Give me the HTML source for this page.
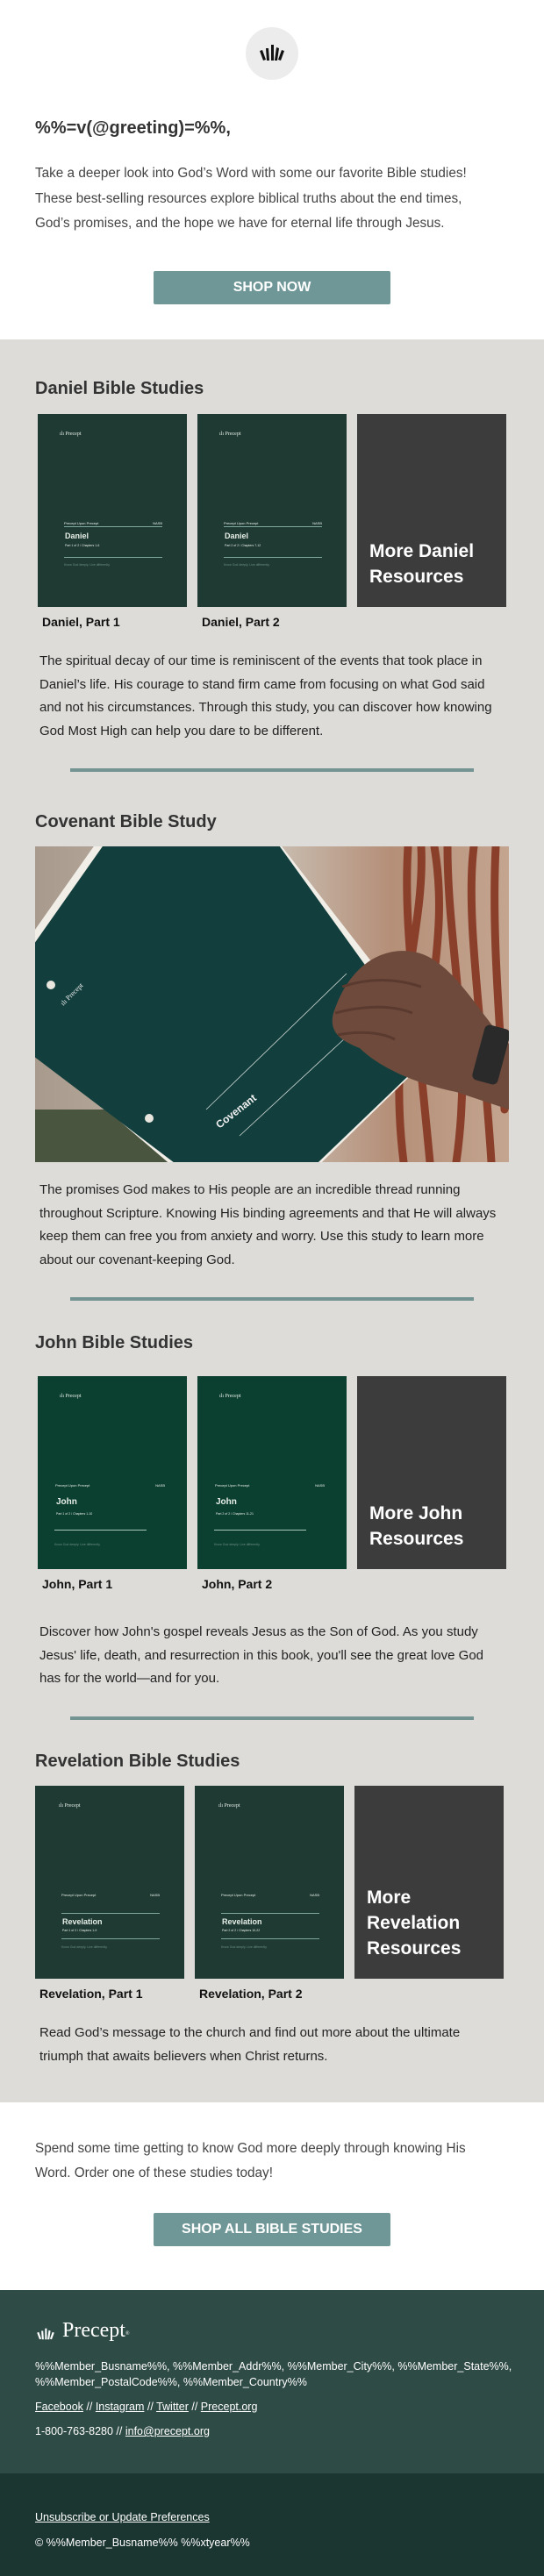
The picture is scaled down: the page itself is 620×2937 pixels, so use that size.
<!DOCTYPE html>
<html><head><meta charset="utf-8"><style>
*{margin:0;padding:0;box-sizing:border-box}
body{width:620px;height:2937px;position:relative;background:#fff;font-family:"Liberation Sans",Arial,sans-serif;overflow:hidden}
.a{position:absolute}
.p{position:absolute;left:45px;width:530px;font-size:15px;line-height:26.5px;color:#222}
.h{position:absolute;left:40px;font-size:20px;font-weight:bold;color:#333;line-height:24px}
.cap{position:absolute;font-size:14px;font-weight:bold;color:#111;line-height:16px}
.cov{position:absolute;width:170px;height:220px;background:#1e3a33;color:#e8efe9}
.cov.j{background:#0b3f30}
.cov .lg{position:absolute;left:25px;top:20px;font-size:6px;font-family:"Liberation Serif",serif}
.cov .l1{position:absolute;left:30px;top:122px;width:112px;font-size:4px}
.cov .l1 b{float:right;font-weight:normal}
.cov .ln{position:absolute;left:30px;width:112px;height:1px;background:#7fa69c}
.cov .t{position:absolute;left:31px;top:134px;font-size:9px;font-weight:bold}
.cov .s{position:absolute;left:31px;top:148px;font-size:3.5px}
.cov .f{position:absolute;left:30px;top:170px;font-size:3.5px;color:#6f8f86}
.more{position:absolute;width:170px;height:220px;background:#3c3c3c;color:#fff}
.more div{position:absolute;left:14px;bottom:20px;font-size:21px;font-weight:bold;line-height:29px}
.div{position:absolute;left:80px;width:460px;height:4px;background:#739493}
.btn{position:absolute;left:175px;width:270px;background:#6f9797;color:#fff;font-weight:bold;font-size:16px;text-align:center;border-radius:2px}
.ft{position:absolute;left:40px;color:#fff;font-size:12.5px;line-height:18px}
.ft u{text-decoration:underline}
</style></head><body>

<div class="a" style="left:280px;top:31px;width:60px;height:60px;border-radius:50%;background:#ececec"></div>
<svg class="a" style="left:295px;top:50px" width="30" height="20" viewBox="0 0 30 20">
<g fill="#111"><polygon points="1,8 4,7 8,18 5,19"/><polygon points="8,5 11,5 12,19 9,19"/><polygon points="14,1 17,1 17,19 14,19"/><polygon points="20,4 23,5 21,19 18,19"/><polygon points="26,7 29,8 25,19 22,18"/></g></svg>

<div class="a" style="left:40px;top:135px;font-size:20px;font-weight:bold;color:#333">%%=v(@greeting)=%%,</div>
<div class="a" style="left:40px;top:184px;width:522px;font-size:15.3px;line-height:28.5px;color:#444">Take a deeper look into God’s Word with some our favorite Bible studies! These best-selling resources explore biblical truths about the end times, God’s promises, and the hope we have for eternal life through Jesus.</div>
<div class="btn" style="top:309px;height:38px;line-height:38px">SHOP NOW</div>

<div class="a" style="left:0;top:387px;width:620px;height:2010px;background:#dddcd8"></div>

<!-- Daniel -->
<div class="h" style="top:431px">Daniel Bible Studies</div>
<div class="cov" style="left:43px;top:472px"><div class="lg">ılı Precept</div><div class="l1">Precept Upon Precept<b>NASB</b></div><div class="ln" style="top:128px"></div><div class="t">Daniel</div><div class="s">Part 1 of 2 / Chapters 1-6</div><div class="ln" style="top:163px"></div><div class="f">Know God deeply. Live differently.</div></div>
<div class="cov" style="left:225px;top:472px"><div class="lg">ılı Precept</div><div class="l1">Precept Upon Precept<b>NASB</b></div><div class="ln" style="top:128px"></div><div class="t">Daniel</div><div class="s">Part 2 of 2 / Chapters 7-12</div><div class="ln" style="top:163px"></div><div class="f">Know God deeply. Live differently.</div></div>
<div class="more" style="left:407px;top:472px"><div>More Daniel<br>Resources</div></div>
<div class="cap" style="left:48px;top:701px">Daniel, Part 1</div>
<div class="cap" style="left:230px;top:701px">Daniel, Part 2</div>
<div class="p" style="top:741px">The spiritual decay of our time is reminiscent of the events that took place in Daniel’s life. His courage to stand firm came from focusing on what God said and not his circumstances. Through this study, you can discover how knowing God Most High can help you dare to be different.</div>
<div class="div" style="top:876px"></div>

<!-- Covenant -->
<div class="h" style="top:925px">Covenant Bible Study</div>
<svg class="a" style="left:40px;top:965px" width="540" height="360" viewBox="0 0 540 360">
<defs><linearGradient id="bg" x1="0" y1="0" x2="1" y2="0"><stop offset="0" stop-color="#a89a8c"/><stop offset="0.5" stop-color="#c9bfb3"/><stop offset="0.75" stop-color="#b58f78"/><stop offset="1" stop-color="#c4a590"/></linearGradient></defs>
<rect width="540" height="360" fill="url(#bg)"/>
<rect x="0" y="300" width="300" height="60" fill="#4a5540"/>
<g stroke="#8a3f2a" stroke-width="9" fill="none" stroke-linecap="round">
<path d="M425,0 C420,80 430,150 450,360"/><path d="M440,0 C445,100 400,200 420,360"/><path d="M470,0 C470,120 500,220 480,360"/><path d="M500,0 C490,80 510,200 520,360"/><path d="M525,0 C520,100 530,200 535,300"/><path d="M455,0 C470,90 450,150 445,250"/></g>
<polygon points="-60,180 95,-40 250,-40 460,230 245,440" fill="#f1eee8"/>
<polygon points="-60,195 105,-40 250,-40 450,238 250,430" fill="#123f3d"/>
<g fill="#e9e6df"><circle cx="18" cy="158" r="5"/><circle cx="130" cy="310" r="5"/><circle cx="236" cy="393" r="5"/></g>
<text x="0" y="0" transform="translate(210,322) rotate(-38)" fill="#f2f2f2" font-family="Liberation Sans" font-weight="bold" font-size="12">Covenant</text>
<text x="0" y="0" transform="translate(32,182) rotate(-45)" fill="#f2f2f2" font-family="Liberation Serif" font-size="8">ılı Precept</text>
<path d="M195,300 L355,145 M233,330 L395,180" stroke="#cfd8d4" stroke-width="0.8"/>
<path d="M340,190 C360,130 400,115 430,120 C470,125 500,180 530,215 L540,225 L540,300 L480,280 C430,270 390,250 370,230 C345,220 335,210 340,190Z" fill="#6e4a3c"/>
<path d="M350,160 C380,150 410,150 440,160 M342,190 C380,180 410,182 430,190 M345,215 C370,210 395,212 410,220" stroke="#5a3a2f" stroke-width="3" fill="none"/>
<rect x="505" y="205" width="30" height="65" rx="6" fill="#2a2a2a" transform="rotate(15 520 237)"/>
</svg>
<div class="p" style="top:1344px">The promises God makes to His people are an incredible thread running throughout Scripture. Knowing His binding agreements and that He will always keep them can free you from anxiety and worry. Use this study to learn more about our covenant-keeping God.</div>
<div class="div" style="top:1479px"></div>

<!-- John -->
<div class="h" style="top:1519px">John Bible Studies</div>
<div class="cov j" style="left:43px;top:1569px"><div class="lg">ılı Precept</div><div class="l1" style="left:20px;width:125px">Precept Upon Precept<b>NASB</b></div><div class="t" style="left:21px;top:138px;font-size:10px">John</div><div class="s" style="left:21px;top:155px">Part 1 of 2 / Chapters 1-10</div><div class="ln" style="left:19px;width:105px;top:175px;background:#a9c9bd;width:105px"></div><div class="f" style="left:19px;top:190px">Know God deeply. Live differently.</div></div>
<div class="cov j" style="left:225px;top:1569px"><div class="lg">ılı Precept</div><div class="l1" style="left:20px;width:125px">Precept Upon Precept<b>NASB</b></div><div class="t" style="left:21px;top:138px;font-size:10px">John</div><div class="s" style="left:21px;top:155px">Part 2 of 2 / Chapters 11-21</div><div class="ln" style="left:19px;width:105px;top:175px;background:#a9c9bd"></div><div class="f" style="left:19px;top:190px">Know God deeply. Live differently.</div></div>
<div class="more" style="left:407px;top:1569px"><div>More John<br>Resources</div></div>
<div class="cap" style="left:48px;top:1798px">John, Part 1</div>
<div class="cap" style="left:230px;top:1798px">John, Part 2</div>
<div class="p" style="top:1848px">Discover how John's gospel reveals Jesus as the Son of God. As you study Jesus' life, death, and resurrection in this book, you'll see the great love God has for the world—and for you.</div>
<div class="div" style="top:1957px"></div>

<!-- Revelation -->
<div class="h" style="top:1996px">Revelation Bible Studies</div>
<div class="cov" style="left:40px;top:2036px"><div class="lg" style="left:27px">ılı Precept</div><div class="l1">Precept Upon Precept<b>NASB</b></div><div class="ln" style="top:145px"></div><div class="t" style="top:150px">Revelation</div><div class="s" style="top:163px">Part 1 of 2 / Chapters 1-9</div><div class="ln" style="top:174px"></div><div class="f" style="top:182px">Know God deeply. Live differently.</div></div>
<div class="cov" style="left:222px;top:2036px"><div class="lg" style="left:27px">ılı Precept</div><div class="l1">Precept Upon Precept<b>NASB</b></div><div class="ln" style="top:145px"></div><div class="t" style="top:150px">Revelation</div><div class="s" style="top:163px">Part 2 of 2 / Chapters 10-22</div><div class="ln" style="top:174px"></div><div class="f" style="top:182px">Know God deeply. Live differently.</div></div>
<div class="more" style="left:404px;top:2036px"><div>More<br>Revelation<br>Resources</div></div>
<div class="cap" style="left:45px;top:2265px">Revelation, Part 1</div>
<div class="cap" style="left:227px;top:2265px">Revelation, Part 2</div>
<div class="p" style="top:2305px">Read God’s message to the church and find out more about the ultimate triumph that awaits believers when Christ returns.</div>

<!-- closing -->
<div class="a" style="left:40px;top:2436px;width:522px;font-size:15.3px;line-height:28px;color:#444">Spend some time getting to know God more deeply through knowing His Word. Order one of these studies today!</div>
<div class="btn" style="top:2523px;height:38px;line-height:38px">SHOP ALL BIBLE STUDIES</div>

<!-- footer -->
<div class="a" style="left:0;top:2611px;width:620px;height:209px;background:#2f4b45"></div>
<div class="a" style="left:0;top:2820px;width:620px;height:117px;background:#1b3530"></div>
<svg class="a" style="left:40px;top:2654px" width="24" height="14" viewBox="0 0 30 20">
<g fill="#fff"><polygon points="1,8 4,7 8,18 5,19"/><polygon points="8,5 11,5 12,19 9,19"/><polygon points="14,1 17,1 17,19 14,19"/><polygon points="20,4 23,5 21,19 18,19"/><polygon points="26,7 29,8 25,19 22,18"/></g></svg>
<div class="a" style="left:71px;top:2643px;font-family:'Liberation Serif',serif;font-size:24px;color:#fff;line-height:28px">Precept<sup style="font-size:6px;vertical-align:top;position:relative;top:4px">®</sup></div>
<div class="ft" style="top:2689px">%%Member_Busname%%, %%Member_Addr%%, %%Member_City%%, %%Member_State%%,<br>%%Member_PostalCode%%, %%Member_Country%%</div>
<div class="ft" style="top:2735px"><u>Facebook</u> // <u>Instagram</u> // <u>Twitter</u> // <u>Precept.org</u></div>
<div class="ft" style="top:2763px">1-800-763-8280 // <u>info@precept.org</u></div>
<div class="ft" style="top:2861px"><u>Unsubscribe or Update Preferences</u></div>
<div class="ft" style="top:2890px">© %%Member_Busname%% %%xtyear%%</div>
</body></html>
